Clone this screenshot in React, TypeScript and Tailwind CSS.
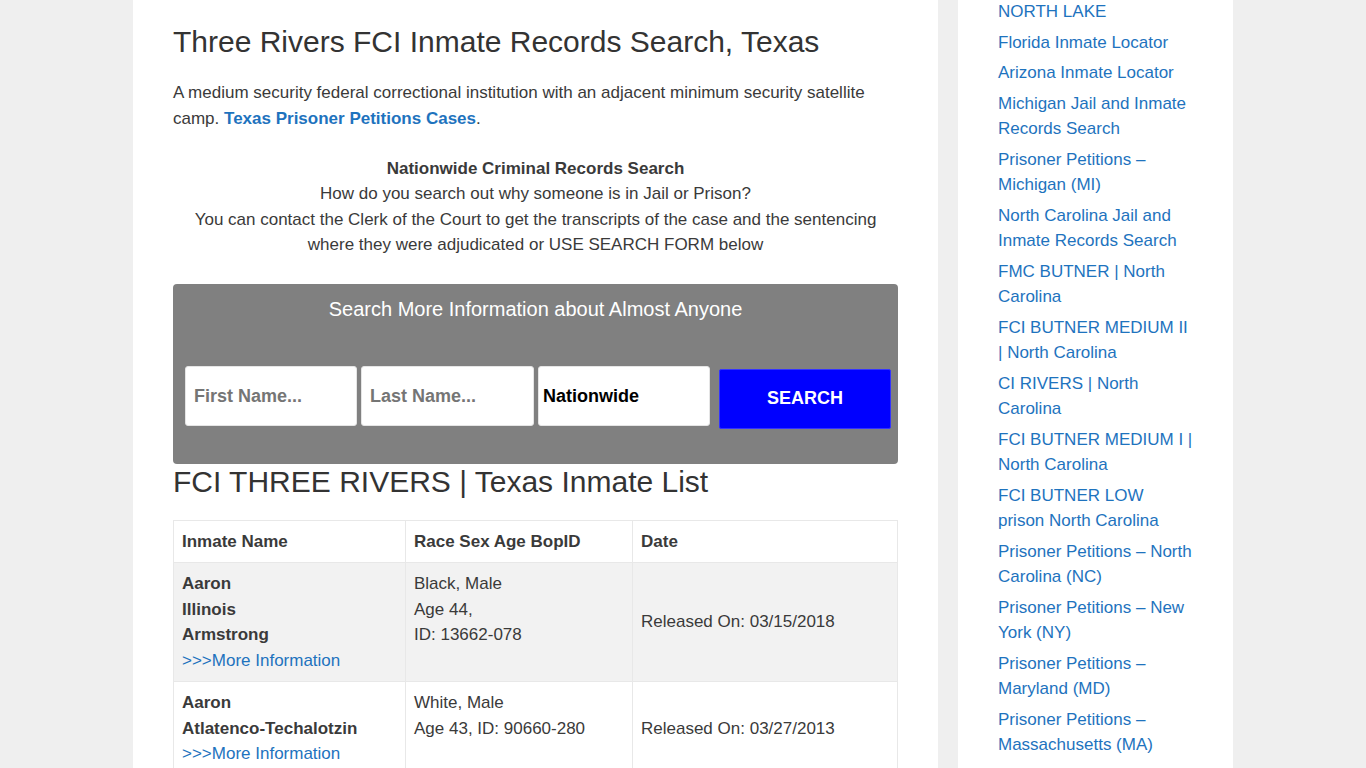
import React from "react";

const sidebarLinks = [
  "NORTH LAKE",
  "Florida Inmate Locator",
  "Arizona Inmate Locator",
  "Michigan Jail and Inmate Records Search",
  "Prisoner Petitions – Michigan (MI)",
  "North Carolina Jail and Inmate Records Search",
  "FMC BUTNER | North Carolina",
  "FCI BUTNER MEDIUM II | North Carolina",
  "CI RIVERS | North Carolina",
  "FCI BUTNER MEDIUM I | North Carolina",
  "FCI BUTNER LOW prison North Carolina",
  "Prisoner Petitions – North Carolina (NC)",
  "Prisoner Petitions – New York (NY)",
  "Prisoner Petitions – Maryland (MD)",
  "Prisoner Petitions – Massachusetts (MA)",
  "Prisoner Petitions – Louisiana (LA)",
];

type Inmate = {
  names: string[];
  details: string[];
  date: string;
};

const inmates: Inmate[] = [
  {
    names: ["Aaron", "Illinois", "Armstrong"],
    details: ["Black, Male", "Age 44,", "ID: 13662-078"],
    date: "Released On: 03/15/2018",
  },
  {
    names: ["Aaron", "Atlatenco-Techalotzin"],
    details: ["White, Male", "Age 43, ID: 90660-280"],
    date: "Released On: 03/27/2013",
  },
  {
    names: ["Abel", "Gonzalez"],
    details: ["Hispanic, Male", "Age 38, ID: 41562-379"],
    date: "Released On: 11/02/2016",
  },
];

const inputCls =
  "h-[60px] rounded-[3px] border border-[#e5e5e5] bg-white px-2 pt-px text-[18px] font-bold text-black placeholder:text-[#757575] outline-none";

function SearchBox() {
  return (
    <div className="mt-[26px] h-[180px] rounded-[4px] bg-[#808080] pl-3 pr-[7px] pt-[12px]">
      {/* heading spans the full box so it centres on the grey panel */}
      <div className="-ml-3 -mr-[7px] text-center text-[20px] leading-[26px] text-white">
        Search More Information about Almost Anyone
      </div>
      <form className="mt-[44px] flex items-start gap-1" onSubmit={(e) => e.preventDefault()}>
        <input placeholder="First Name..." className={`${inputCls} w-[172px] shrink-0`} />
        <input placeholder="Last Name..." className={`${inputCls} w-[173px] shrink-0`} />
        <div className="flex h-[60px] w-[172px] shrink-0 items-center rounded-[3px] border border-[#e5e5e5] bg-white px-1 pt-px text-[18px] font-bold text-black">
          Nationwide
        </div>
        <button
          type="submit"
          className="ml-[5px] mt-[3px] h-[60px] w-[172px] shrink-0 rounded-[2px] border border-[#3333ff] bg-[#0000ff] text-[18px] font-bold text-white"
        >
          SEARCH
        </button>
      </form>
    </div>
  );
}

function InmateTable() {
  return (
    <table className="mt-[19px] w-full border-collapse text-[17px] leading-[25.5px] text-[#3a3a3a]">
      <thead>
        <tr>
          <th className="w-[232px] border border-[#e8e8e8] px-2 py-[8px] text-left font-bold">Inmate Name</th>
          <th className="w-[227px] border border-[#e8e8e8] px-2 py-[8px] text-left font-bold">Race Sex Age BopID</th>
          <th className="border border-[#e8e8e8] px-2 py-[8px] text-left font-bold">Date</th>
        </tr>
      </thead>
      <tbody>
        {inmates.map((m, i) => (
          <tr key={i} className={i % 2 === 0 ? "bg-[#f2f2f2]" : "bg-white"}>
            <td className="border border-[#e8e8e8] px-2 py-[8px] align-top">
              {m.names.map((n) => (
                <div key={n} className="font-bold">
                  {n}
                </div>
              ))}
              <a href="#" className="text-[#1e73be]">
                &gt;&gt;&gt;More Information
              </a>
            </td>
            <td className="border border-[#e8e8e8] px-2 py-[8px] align-top">
              {m.details.map((d) => (
                <div key={d}>{d}</div>
              ))}
            </td>
            <td className="border border-[#e8e8e8] px-2 py-[8px] align-middle">{m.date}</td>
          </tr>
        ))}
      </tbody>
    </table>
  );
}

export default function App() {
  return (
    <div className="min-h-screen bg-[#efefef] font-['Liberation_Sans',Arial,sans-serif] text-[#3a3a3a]">
      <div className="mx-auto flex w-[1100px] items-start gap-5">
        <main className="w-[805px] bg-white px-10 pb-10 pt-[22px]">
          <h1 className="text-[30px] leading-[40px] font-normal text-[#333]">
            Three Rivers FCI Inmate Records Search, Texas
          </h1>
          <p className="mt-[18px] text-[17px] leading-[26px]">
            A medium security federal correctional institution with an adjacent minimum security satellite camp.{" "}
            <a href="#" className="font-bold text-[#1e73be]">
              Texas Prisoner Petitions Cases
            </a>
            .
          </p>
          <div className="mt-[24px] text-center text-[17px] leading-[25.4px]">
            <div className="font-bold">Nationwide Criminal Records Search</div>
            <div>How do you search out why someone is in Jail or Prison?</div>
            <div>
              You can contact the Clerk of the Court to get the transcripts of the case and the sentencing
              <br />
              where they were adjudicated or USE SEARCH FORM below
            </div>
          </div>
          <SearchBox />
          <h2 className="mt-[-1px] text-[30px] leading-[38px] font-normal text-[#333]">
            FCI THREE RIVERS | Texas Inmate List
          </h2>
          <InmateTable />
        </main>
        <aside className="w-[275px] bg-white px-10 pb-10 pt-0">
          <ul className="text-[17px] leading-[25px]">
            {sidebarLinks.map((l, i) => (
              <li key={i} className={i === 0 ? "mt-[-1px] pb-[6px]" : i === 1 ? "pb-[5px]" : "pb-[6px]"}>
                <a href="#" className="text-[#1e73be]">
                  {l}
                </a>
              </li>
            ))}
          </ul>
        </aside>
      </div>
    </div>
  );
}
